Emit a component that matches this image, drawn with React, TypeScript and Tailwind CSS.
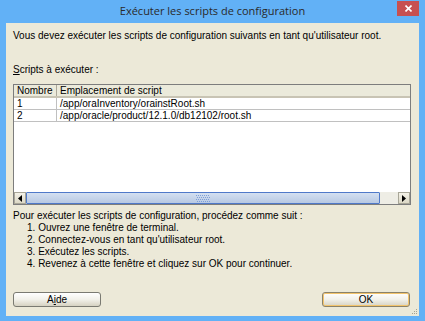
import React from 'react';

const rows = [
  { num: '1', path: '/app/oraInventory/orainstRoot.sh' },
  { num: '2', path: '/app/oracle/product/12.1.0/db12102/root.sh' },
];

const steps = [
  'Ouvrez une fenêtre de terminal.',
  "Connectez-vous en tant qu'utilisateur root.",
  'Exécutez les scripts.',
  'Revenez à cette fenêtre et cliquez sur OK pour continuer.',
];

// petit bouton fléché de la barre de défilement
const ArrowButton = ({ dir }: { dir: 'left' | 'right' }) => (
  <div className="w-[12px] h-full flex items-center justify-center bg-gradient-to-b from-[#f4f2e8] to-[#dcd8c6] border border-[#a8a698]">
    <svg width="4" height="7" viewBox="0 0 4 7">
      {dir === 'left' ? <path d="M4 0 L0 3.5 L4 7 Z" fill="#000" /> : <path d="M0 0 L4 3.5 L0 7 Z" fill="#000" />}
    </svg>
  </div>
);

export default function App() {
  return (
    <div
      className="w-[425px] h-[321px] bg-[#62b1f6] flex flex-col overflow-hidden"
      style={{ fontFamily: '"Liberation Sans", Arial, sans-serif' }}
    >
      {/* Barre de titre */}
      <div className="relative h-[23px] flex items-center justify-center">
        <span
          className="text-[11px] text-[#2a2a2a]"
          style={{ fontFamily: '"Open Sans", "Noto Sans", sans-serif' }}
        >
          Exécuter les scripts de configuration
        </span>
        <div className="absolute right-[6px] top-[1px] w-[22px] h-[15px] bg-[#c75050] flex items-center justify-center">
          <svg width="7" height="7" viewBox="0 0 7 7">
            <path d="M0.5 0.5 L6.5 6.5 M6.5 0.5 L0.5 6.5" stroke="#fff" strokeWidth="1.6" />
          </svg>
        </div>
      </div>

      {/* Contenu */}
      <div className="relative mx-[6px] mb-[5px] flex-1 bg-[#ece9d8] flex flex-col px-[7px] text-[10px] text-black">
        <p className="mt-[7px] h-[12px] leading-[12px]">
          Vous devez exécuter les scripts de configuration suivants en tant qu'utilisateur root.
        </p>
        <p className="mt-[22px] h-[12px] leading-[12px]">
          <span className="underline">S</span>cripts à exécuter :
        </p>

        {/* Tableau */}
        <div className="mt-[8px] h-[121px] w-[398px] border border-[#7d7d7d] bg-white flex flex-col">
          <div className="flex h-[13px] bg-[#ebeadb] border-b-2 border-[#c8c4b4] leading-[11px]">
            <div className="w-[43px] pl-[3px] border-r border-[#aca899]">Nombre</div>
            <div className="flex-1 pl-[3px]">Emplacement de script</div>
          </div>
          {rows.map((r) => (
            <div key={r.num} className="flex h-[12px] border-b border-[#c0c0c0] leading-[11px]">
              <div className="w-[43px] pl-[3px] border-r border-[#c0c0c0]">{r.num}</div>
              <div className="flex-1 pl-[3px]">{r.path}</div>
            </div>
          ))}
          <div className="flex-1" />

          {/* Barre de défilement horizontale */}
          <div className="flex h-[12px] bg-[#f0efe6]">
            <ArrowButton dir="left" />
            <div className="w-[354px] h-full rounded-[1px] border border-[#4f79c9] bg-gradient-to-b from-[#d4e0f1] to-[#b8c9e3] flex items-center justify-center">
              <svg width="14" height="7" viewBox="0 0 14 7">
                {[0, 2, 4, 6].map((y) =>
                  [0, 2, 4, 6, 8, 10, 12].map((x) => (
                    <rect key={`${x}-${y}`} x={x + (y % 4 === 0 ? 0 : 1)} y={y} width="1" height="1" fill="#7e9fd8" />
                  ))
                )}
              </svg>
            </div>
            <div className="flex-1 bg-[#eeede5]" />
            <ArrowButton dir="right" />
          </div>
        </div>

        {/* Instructions */}
        <div className="mt-[5px] leading-[12px]">
          <p>Pour exécuter les scripts de configuration, procédez comme suit :</p>
          <ol className="pl-[14px]">
            {steps.map((s, i) => (
              <li key={s}>
                {i + 1}. {s}
              </li>
            ))}
          </ol>
        </div>

        <div className="flex-1" />

        {/* Boutons */}
        <div className="flex justify-between mb-[9px]">
          <button className="w-[88px] h-[15px] rounded-[3px] border border-[#7a7a72] bg-gradient-to-b from-[#ffffff] via-[#f2f1ea] to-[#d6d2c2] text-[10px] leading-[13px] text-black">
            A<span className="underline">i</span>de
          </button>
          <button className="w-[88px] h-[15px] rounded-[3px] border border-[#8a826a] bg-gradient-to-b from-[#ffffff] via-[#f2f1ea] to-[#d6d2c2] text-[10px] leading-[11px] text-black ring-1 ring-inset ring-[#f3c46c] mr-[2px]">
            OK
          </button>
        </div>

        {/* Poignée de redimensionnement */}
        <svg className="absolute right-[1px] bottom-[1px]" width="6" height="6" viewBox="0 0 6 6">
          <rect x="4" y="0" width="1" height="1" fill="#a6a293" />
          <rect x="2" y="2" width="1" height="1" fill="#a6a293" />
          <rect x="4" y="2" width="1" height="1" fill="#a6a293" />
          <rect x="0" y="4" width="1" height="1" fill="#a6a293" />
          <rect x="2" y="4" width="1" height="1" fill="#a6a293" />
          <rect x="4" y="4" width="1" height="1" fill="#a6a293" />
        </svg>
      </div>
    </div>
  );
}
